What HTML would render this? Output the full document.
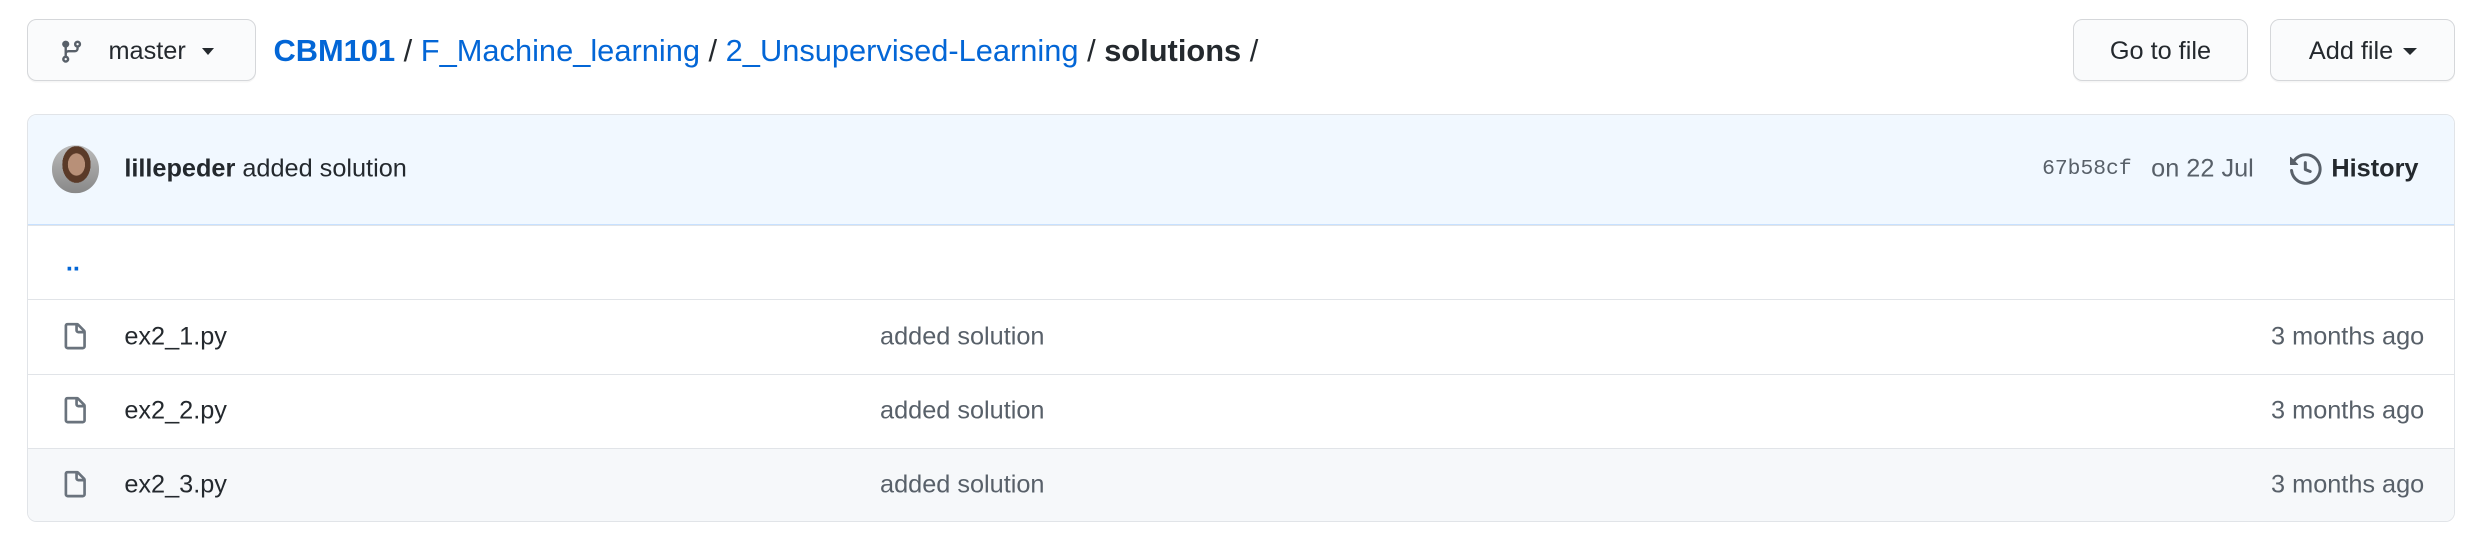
<!DOCTYPE html>
<html><head><meta charset="utf-8"><style>
html,body{margin:0;padding:0;background:#fff;width:2479px;height:546px;overflow:hidden}
#w{zoom:1.581;width:1568px;height:345px;position:relative;font-family:"Liberation Sans",sans-serif;font-size:16px;color:#24292e}
.btn{position:absolute;top:12px;height:39px;border:1px solid #d5d7da;border-radius:6px;background:#fafbfc;box-sizing:border-box;display:flex;align-items:center;justify-content:center;font-size:16px;padding-top:2px;box-shadow:0 1px 0 rgba(27,31,35,.04)}
.bc{position:absolute;left:173px;top:21px;font-size:19.5px;color:#24292e;white-space:nowrap}
.bc a{color:#0366d6;text-decoration:none}
.box{position:absolute;left:17px;top:72px;width:1536px;height:258px;border:1px solid #e1e4e8;border-radius:6px;box-sizing:border-box;overflow:hidden}
.hd{height:69px;background:#f1f8ff;border-bottom:1px solid #c8e1ff;position:relative}
.row{height:47px;border-top:1px solid #e1e4e8;position:relative;box-sizing:border-box}
.row:first-of-type{border-top:none}
.ab{position:absolute;top:50%;transform:translateY(-50%);white-space:nowrap}
</style></head><body><div id="w">
<div class="btn" style="left:17px;width:145px;justify-content:flex-start">
<svg style="margin-left:20px" width="16" height="16" viewBox="0 0 16 16"><path fill="#586069" d="M11.75 2.5a.75.75 0 100 1.5.75.75 0 000-1.5zm-2.25.75a2.25 2.25 0 113 2.122V6A2.5 2.5 0 0110 8.5H6a1 1 0 00-1 1v1.128a2.251 2.251 0 11-1.5 0V5.372a2.25 2.25 0 111.5 0v1.836A2.492 2.492 0 016 7h4a1 1 0 001-1v-.628A2.25 2.25 0 019.5 3.25zM4.25 12a.75.75 0 100 1.5.75.75 0 000-1.5zM3.5 3.25a.75.75 0 111.5 0 .75.75 0 01-1.5 0z"/></svg>
<span style="margin-left:15px">master</span>
<span style="margin-left:10px;border-left:4px solid transparent;border-right:4px solid transparent;border-top:5px solid #24292e"></span>
</div>
<div class="bc"><a href="#" style="font-weight:bold">CBM101</a> / <a href="#">F_Machine_learning</a> / <a href="#">2_Unsupervised-Learning</a> / <b>solutions</b> /</div>
<div class="btn" style="left:1311px;width:111px">Go to file</div>
<div class="btn" style="left:1436px;width:117px">Add file<span style="margin-left:6px;border-left:5px solid transparent;border-right:5px solid transparent;border-top:5px solid #24292e"></span></div>
<div class="box">
<div class="hd">
<div class="ab" style="left:15px;width:30px;height:30px;border-radius:50%;background:radial-gradient(ellipse 30% 38% at 52% 40%,#b89078 0 60%,#5a3a28 62% 100%,transparent 101%),linear-gradient(#bbb,#888);overflow:hidden"></div>
<div class="ab" style="left:61px"><b>lillepeder</b> <span>added solution</span></div>
<div class="ab" style="left:1274px;font-family:'Liberation Mono',monospace;font-size:13.5px;color:#586069">67b58cf</div>
<div class="ab" style="left:1343px;color:#586069">on 22 Jul</div>
<svg class="ab" style="left:1431px" width="20" height="20" viewBox="0 0 16 16"><path fill="#586069" d="M1.643 3.143L.427 1.927A.25.25 0 000 2.104V5.75c0 .138.112.25.25.25h3.646a.25.25 0 00.177-.427L2.715 4.215a6.5 6.5 0 11-1.18 4.458.75.75 0 10-1.493.154 8.001 8.001 0 101.6-5.684zM7.75 4a.75.75 0 01.75.75v2.992l2.028.812a.75.75 0 01-.557 1.392l-2.5-1A.75.75 0 017 8.25v-3.5A.75.75 0 017.75 4z"/></svg>
<div class="ab" style="left:1457px;font-weight:bold">History</div>
</div>
<div class="row"><div class="ab" style="left:24px;color:#0366d6;font-weight:bold">..</div></div>
<div class="row"><svg class="ab" style="left:21px" width="18" height="18" viewBox="0 0 16 16"><path fill="#6a737d" d="M3.75 1.5a.25.25 0 00-.25.25v11.5c0 .138.112.25.25.25h8.5a.25.25 0 00.25-.25V6H9.75A1.75 1.75 0 018 4.25V1.5H3.75zm5.75.56v2.19c0 .138.112.25.25.25h2.19L9.5 2.06zM2 1.75C2 .784 2.784 0 3.75 0h5.086c.464 0 .909.184 1.237.513l3.414 3.414c.329.328.513.773.513 1.237v8.086A1.75 1.75 0 0112.25 15h-8.5A1.75 1.75 0 012 13.25V1.75z"/></svg><div class="ab" style="left:61px">ex2_1.py</div><div class="ab" style="left:539px;color:#586069">added solution</div><div class="ab" style="right:19px;color:#586069">3 months ago</div></div>
<div class="row"><svg class="ab" style="left:21px" width="18" height="18" viewBox="0 0 16 16"><path fill="#6a737d" d="M3.75 1.5a.25.25 0 00-.25.25v11.5c0 .138.112.25.25.25h8.5a.25.25 0 00.25-.25V6H9.75A1.75 1.75 0 018 4.25V1.5H3.75zm5.75.56v2.19c0 .138.112.25.25.25h2.19L9.5 2.06zM2 1.75C2 .784 2.784 0 3.75 0h5.086c.464 0 .909.184 1.237.513l3.414 3.414c.329.328.513.773.513 1.237v8.086A1.75 1.75 0 0112.25 15h-8.5A1.75 1.75 0 012 13.25V1.75z"/></svg><div class="ab" style="left:61px">ex2_2.py</div><div class="ab" style="left:539px;color:#586069">added solution</div><div class="ab" style="right:19px;color:#586069">3 months ago</div></div>
<div class="row" style="background:#f6f8fa"><svg class="ab" style="left:21px" width="18" height="18" viewBox="0 0 16 16"><path fill="#6a737d" d="M3.75 1.5a.25.25 0 00-.25.25v11.5c0 .138.112.25.25.25h8.5a.25.25 0 00.25-.25V6H9.75A1.75 1.75 0 018 4.25V1.5H3.75zm5.75.56v2.19c0 .138.112.25.25.25h2.19L9.5 2.06zM2 1.75C2 .784 2.784 0 3.75 0h5.086c.464 0 .909.184 1.237.513l3.414 3.414c.329.328.513.773.513 1.237v8.086A1.75 1.75 0 0112.25 15h-8.5A1.75 1.75 0 012 13.25V1.75z"/></svg><div class="ab" style="left:61px">ex2_3.py</div><div class="ab" style="left:539px;color:#586069">added solution</div><div class="ab" style="right:19px;color:#586069">3 months ago</div></div>
</div>
</div></body></html>
